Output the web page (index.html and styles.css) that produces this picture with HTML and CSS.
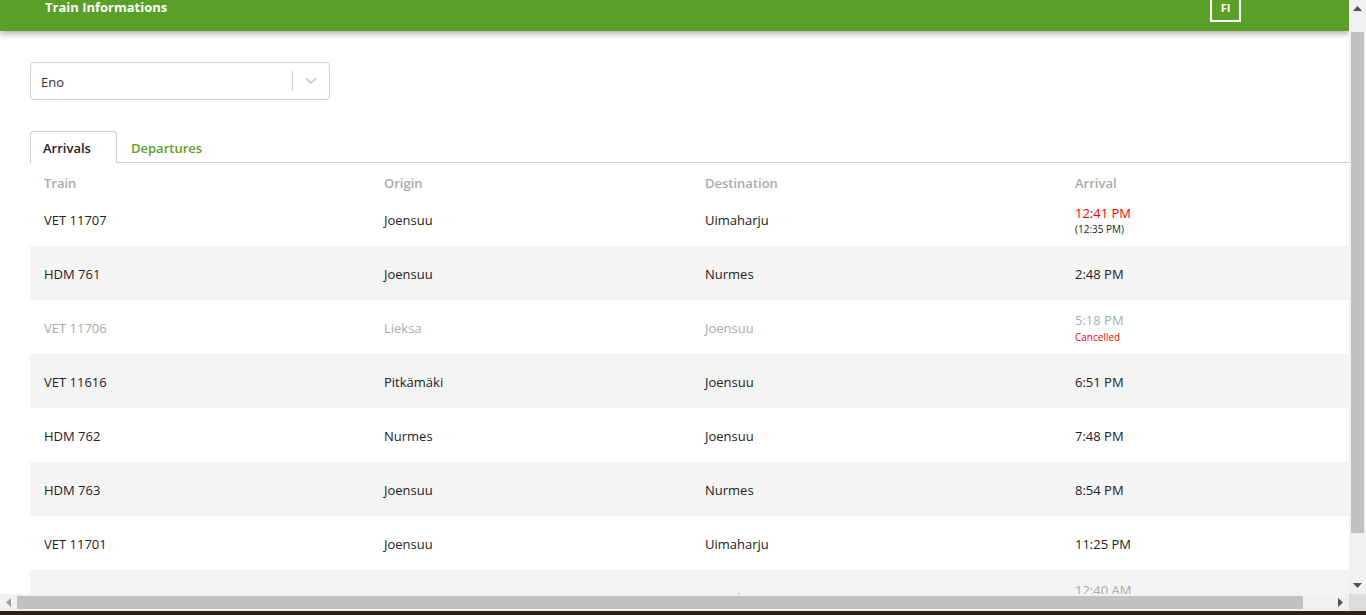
FILE: index.html
```html
<!DOCTYPE html>
<html>
<head>
<meta charset="utf-8">
<link rel="stylesheet" href="styles.css">
</head>
<body>
<div class="frame">
  <div class="viewport">
    <header class="topbar">
      <div class="topbar-inner">
        <div class="brand">Train Informations</div>
        <div class="lang">FI</div>
      </div>
    </header>
    <main class="content">
      <div class="select">
        <span class="select-value">Eno</span>
        <span class="select-sep"></span>
        <span class="select-arrow">
          <svg width="12" height="8" viewBox="0 0 12 8"><path d="M1 1.5 L6 6 L11 1.5" fill="none" stroke="#cccccc" stroke-width="2"/></svg>
        </span>
      </div>
      <nav class="tabs">
        <div class="tab active">Arrivals</div>
        <div class="tab">Departures</div>
      </nav>
      <div class="table">
        <div class="row head">
          <div>Train</div><div>Origin</div><div>Destination</div><div>Arrival</div>
        </div>
        <div class="row">
          <div>VET 11707</div><div>Joensuu</div><div>Uimaharju</div>
          <div class="time"><span class="late">12:41 PM</span><span class="note">(12:35 PM)</span></div>
        </div>
        <div class="row alt">
          <div>HDM 761</div><div>Joensuu</div><div>Nurmes</div><div class="time">2:48 PM</div>
        </div>
        <div class="row cancelled">
          <div>VET 11706</div><div>Lieksa</div><div>Joensuu</div>
          <div class="time"><span>5:18 PM</span><span class="note red">Cancelled</span></div>
        </div>
        <div class="row alt">
          <div>VET 11616</div><div>Pitkämäki</div><div>Joensuu</div><div class="time">6:51 PM</div>
        </div>
        <div class="row">
          <div>HDM 762</div><div>Nurmes</div><div>Joensuu</div><div class="time">7:48 PM</div>
        </div>
        <div class="row alt">
          <div>HDM 763</div><div>Joensuu</div><div>Nurmes</div><div class="time">8:54 PM</div>
        </div>
        <div class="row">
          <div>VET 11701</div><div>Joensuu</div><div>Uimaharju</div><div class="time">11:25 PM</div>
        </div>
        <div class="row alt cancelled">
          <div>VET 11695</div><div>Joensuu</div><div>Uimaharju</div>
          <div class="time"><span>12:40 AM</span><span class="note red">Cancelled</span></div>
        </div>
      </div>
    </main>
  </div>
  <div class="vscroll">
    <div class="sbtn"><svg width="9" height="5" viewBox="0 0 9 5"><path d="M0 5 L4.5 0 L9 5Z" fill="#505050"/></svg></div>
    <div class="vgap"></div>
    <div class="vthumb"></div>
    <div class="vrest"></div>
    <div class="sbtn"><svg width="9" height="5" viewBox="0 0 9 5"><path d="M0 0 L4.5 5 L9 0Z" fill="#505050"/></svg></div>
  </div>
  <div class="hscroll">
    <div class="sbtn"><svg width="5" height="9" viewBox="0 0 5 9"><path d="M5 0 L0 4.5 L5 9Z" fill="#a3a3a3"/></svg></div>
    <div class="hthumb"></div>
    <div class="hrest"></div>
    <div class="sbtn"><svg width="5" height="9" viewBox="0 0 5 9"><path d="M0 0 L5 4.5 L0 9Z" fill="#505050"/></svg></div>
  </div>
  <div class="corner"></div>
  <div class="taskbar"></div>
</div>
</body>
</html>
```

FILE: styles.css
```css
html, body {
  margin: 0;
  padding: 0;
  overflow: hidden;
}
body {
  font-family: "Open Sans", "Noto Sans", sans-serif;
  color: #222;
  background: #fff;
}
.frame {
  width: 1366px;
  height: 615px;
  display: grid;
  grid-template-columns: 1349px 17px;
  grid-template-rows: 594px 17px 4px;
}
.viewport {
  overflow: hidden;
  background: #fff;
}
.topbar {
  height: 31px;
  background: #5a9f28;
  box-shadow: 0 3px 6px rgba(0,0,0,0.3);
  overflow: hidden;
  position: relative;
  z-index: 2;
}
.topbar-inner {
  display: flex;
  align-items: flex-end;
  margin-top: -12px;
  padding-left: 45px;
}
.brand {
  align-self: flex-start;
  margin-top: 11px;
  color: #fff;
  font-weight: 700;
  font-size: 13px;
  line-height: 16px;
  width: 1165px;
}
.lang {
  width: 27px;
  height: 26px;
  border: 2px solid #fff;
  color: #fff;
  font-weight: 700;
  font-size: 11px;
  display: flex;
  align-items: flex-end;
  justify-content: center;
  line-height: 16px;
  padding-bottom: 4px;
  box-sizing: content-box;
}
.content {
  padding: 31px 0 0 30px;
}
.select {
  width: 298px;
  height: 36px;
  border: 1px solid #cccccc;
  border-radius: 4px;
  display: flex;
  align-items: center;
  font-size: 13px;
}
.select-value {
  flex: 1;
  padding-left: 10px;
  padding-top: 1px;
  color: #333;
}
.select-sep {
  width: 1px;
  height: 20px;
  background: #cccccc;
}
.select-arrow {
  width: 36px;
  display: flex;
  justify-content: center;
  align-items: center;
}
.tabs {
  margin-top: 31px;
  display: flex;
  border-bottom: 1px solid #cccccc;
  height: 31px;
}
.tab {
  padding: 1px 13px 0;
  font-size: 13px;
  font-weight: 600;
  color: #5a9f28;
  line-height: 31px;
  border: 1px solid transparent;
  border-bottom: none;
  border-radius: 4px 4px 0 0;
}
.tab.active {
  color: #222;
  border-color: #cccccc;
  background: #fff;
  margin-bottom: -1px;
  height: 32px;
  width: 87px;
  box-sizing: border-box;
  padding: 1px 12px 0;
}
.table {
  font-size: 13px;
}
.row {
  display: grid;
  grid-template-columns: 340px 321px 370px 1fr;
  padding-left: 14px;
  padding-top: 2px;
  box-sizing: border-box;
  height: 54px;
  align-items: center;
}
.row.head {
  height: 29px;
  color: #aaaaaa;
  font-weight: 600;
  padding-top: 11px;
}
.row.alt {
  background: #f4f4f4;
}
.row.cancelled {
  color: #aaaaaa;
}
.time {
  display: flex;
  flex-direction: column;
}
.late {
  color: #ff0000;
}
.note {
  font-size: 10px;
  line-height: 14px;
  color: #222;
}
.note.red {
  color: #ff0000;
  line-height: 16px;
}
.vscroll {
  background: #f1f1f1;
  display: flex;
  flex-direction: column;
  grid-row: 1;
  grid-column: 2;
}
.sbtn {
  width: 17px;
  height: 17px;
  flex: none;
  display: flex;
  align-items: center;
  justify-content: center;
}
.vgap {
  height: 15px;
}
.vthumb {
  height: 501px;
  margin: 0 2px;
  background: #c1c1c1;
}
.vrest {
  flex: 1;
}
.hscroll {
  grid-row: 2;
  grid-column: 1;
  background: #f1f1f1;
  display: flex;
}
.hthumb {
  width: 1286px;
  margin: 2px 0;
  background: #c1c1c1;
}
.hrest {
  flex: 1;
}
.corner {
  grid-row: 2;
  grid-column: 2;
  background: #dcdcdc;
}
.taskbar {
  grid-row: 3;
  grid-column: 1 / 3;
  background: #2e1f19;
}
```
